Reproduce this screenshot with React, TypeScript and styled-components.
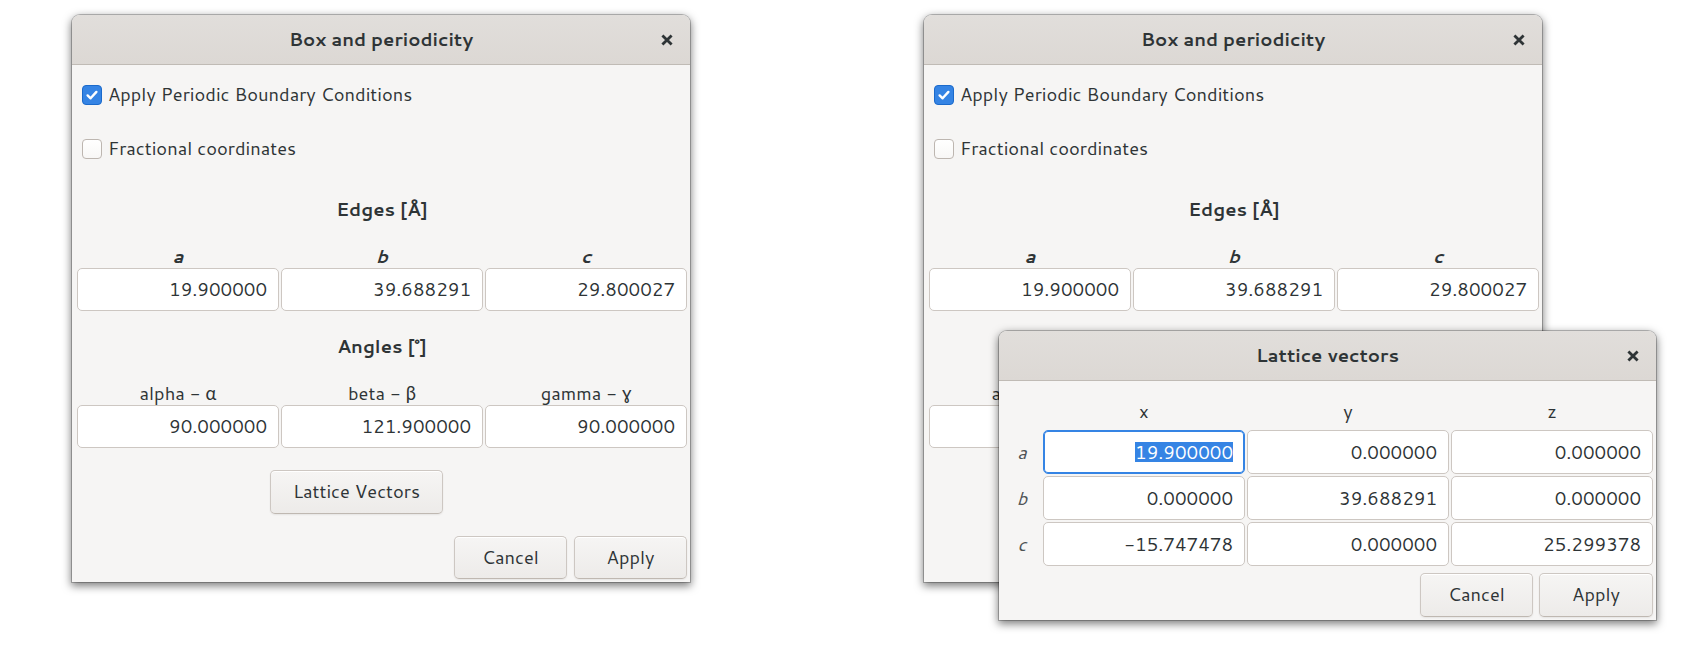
import React from "react";
import styled, { createGlobalStyle, css } from "styled-components";

const GlobalStyle = createGlobalStyle`
  html, body { margin: 0; padding: 0; background: #ffffff; }
  body {
    font-family: Cantarell, Lato, "Noto Sans", sans-serif;
    font-size: 18.3px;
    color: #2e3436;
  }
`;

const Desktop = styled.main`
  display: flex;
  align-items: flex-start;
  gap: 234px;
  padding: 15px 0 0 72px;
  height: 647px;
  box-sizing: border-box;
  overflow: hidden;
`;

const WindowSlot = styled.div`
  position: relative;
`;

const Dialog = styled.section<{ $width: number }>`
  width: ${(p) => p.$width}px;
  display: flex;
  flex-direction: column;
  background: #f6f5f4;
  border-radius: 8px 8px 0 0;
  box-shadow: 0 3px 9px 1px rgba(0, 0, 0, 0.5), 0 0 0 1px rgba(0, 0, 0, 0.23);
`;

const FloatingDialog = styled(Dialog)`
  position: absolute;
  left: 75px;
  top: 316px;
  z-index: 2;
`;

const TitleBar = styled.header`
  height: 49px;
  display: grid;
  grid-template-columns: 1fr auto 1fr;
  align-items: center;
  background: linear-gradient(#e1dedb, #dcd8d4);
  border-bottom: 1px solid #c0bbb5;
  border-radius: 8px 8px 0 0;
`;

const Title = styled.h1`
  grid-column: 2;
  margin: 0;
  font-size: 18.3px;
  font-weight: bold;
  line-height: 22px;
  padding-bottom: 2px;
  color: #2e3436;
`;

const CloseButton = styled.button`
  grid-column: 3;
  justify-self: end;
  margin-right: 17px;
  width: 13px;
  height: 13px;
  padding: 0;
  border: 0;
  background: none;
  display: flex;
  align-items: center;
  justify-content: center;
  color: #2e3436;
`;

const Body = styled.div<{ $pad: string }>`
  display: flex;
  flex-direction: column;
  padding: ${(p) => p.$pad};
`;

const CheckRow = styled.label<{ $mt: number }>`
  display: flex;
  align-items: center;
  gap: 6px;
  height: 21px;
  margin-top: ${(p) => p.$mt}px;
  padding-left: 5px;
  line-height: 21px;
`;

const CheckBox = styled.span<{ $checked?: boolean }>`
  width: 20px;
  height: 20px;
  box-sizing: border-box;
  border-radius: 4px;
  display: flex;
  align-items: center;
  justify-content: center;
  ${(p) =>
    p.$checked
      ? css`
          background: #3584e4;
          border: 1px solid #1b6acb;
        `
      : css`
          background: linear-gradient(#ffffff, #f8f7f6);
          border: 1px solid #bdb6b0;
        `}
`;

const Heading = styled.h2<{ $mt: number }>`
  margin: ${(p) => p.$mt}px 0 0;
  text-align: center;
  font-size: 18.3px;
  font-weight: bold;
  line-height: 22px;
`;

const FieldGrid = styled.div<{ $mt: number; $cols: string; $rowGap: number }>`
  display: grid;
  grid-template-columns: ${(p) => p.$cols};
  column-gap: 2px;
  row-gap: ${(p) => p.$rowGap}px;
  margin-top: ${(p) => p.$mt}px;
`;

const ColLabel = styled.span<{ $em?: boolean; $gap?: number }>`
  text-align: center;
  line-height: 22px;
  margin-bottom: ${(p) => p.$gap ?? 0}px;
  ${(p) =>
    p.$em &&
    css`
      font-weight: bold;
      font-style: italic;
    `}
`;

const RowLabel = styled.span`
  display: flex;
  align-items: center;
  justify-content: center;
  font-style: italic;
  color: #4d5254;
`;

const Entry = styled.div<{ $focused?: boolean; $h: number }>`
  height: ${(p) => p.$h}px;
  box-sizing: border-box;
  display: flex;
  align-items: center;
  justify-content: flex-end;
  padding: 0 11px 1px;
  background: #ffffff;
  border: 1px solid #cdc7c2;
  border-radius: 5px;
  color: #2e3436;
  ${(p) =>
    p.$focused &&
    css`
      border-color: #3584e4;
      box-shadow: inset 0 0 0 1px #3584e4;
    `}
`;

const Selection = styled.span`
  background: #3584e4;
  color: #ffffff;
  line-height: 20px;
`;

const ButtonRow = styled.div<{ $mt: number; $pl?: number; $end?: boolean; $gap?: number }>`
  display: flex;
  justify-content: ${(p) => (p.$end ? "flex-end" : "flex-start")};
  gap: ${(p) => p.$gap ?? 0}px;
  margin-top: ${(p) => p.$mt}px;
  padding-left: ${(p) => p.$pl ?? 0}px;
`;

const PushButton = styled.button<{ $w: number; $h: number }>`
  width: ${(p) => p.$w}px;
  height: ${(p) => p.$h}px;
  box-sizing: border-box;
  padding: 0 0 2px;
  font: inherit;
  color: #2e3436;
  background: linear-gradient(#f6f5f4, #edebe9);
  border: 1px solid #cdc7c2;
  border-bottom-color: #bfb8b1;
  border-radius: 5px;
  box-shadow: inset 0 1px #ffffff, 0 1px 2px rgba(0, 0, 0, 0.07);
`;

const CloseIcon = () => (
  <svg width="12" height="12" viewBox="0 0 12 12" aria-hidden>
    <path d="M1.4 1.4 L10.6 10.6 M10.6 1.4 L1.4 10.6" stroke="currentColor" strokeWidth="2.8" strokeLinecap="butt" />
  </svg>
);

const CheckMark = () => (
  <svg width="14" height="14" viewBox="0 0 14 14" aria-hidden>
    <path d="M2.6 7.4 L5.6 10.3 L11.4 3.9" fill="none" stroke="#ffffff" strokeWidth="2.4" strokeLinecap="round" strokeLinejoin="round" />
  </svg>
);

const edges = [
  { label: "a", value: "19.900000" },
  { label: "b", value: "39.688291" },
  { label: "c", value: "29.800027" },
];

const angles = [
  { label: "alpha - α", value: "90.000000" },
  { label: "beta - β", value: "121.900000" },
  { label: "gamma - ɣ", value: "90.000000" },
];

const lattice = [
  { label: "a", values: ["19.900000", "0.000000", "0.000000"] },
  { label: "b", values: ["0.000000", "39.688291", "0.000000"] },
  { label: "c", values: ["-15.747478", "0.000000", "25.299378"] },
];

const THREE = "repeat(3, 202px)";

function BoxDialog() {
  return (
    <Dialog $width={618}>
      <TitleBar>
        <Title>Box and periodicity</Title>
        <CloseButton aria-label="Close">
          <CloseIcon />
        </CloseButton>
      </TitleBar>
      <Body $pad="0 3px 3px 5px">
        <CheckRow $mt={19}>
          <CheckBox $checked>
            <CheckMark />
          </CheckBox>
          Apply Periodic Boundary Conditions
        </CheckRow>
        <CheckRow $mt={33}>
          <CheckBox />
          Fractional coordinates
        </CheckRow>

        <Heading $mt={39}>Edges [Å]</Heading>
        <FieldGrid $mt={25} $cols={THREE} $rowGap={1}>
          {edges.map((e) => (
            <ColLabel key={e.label} $em>
              {e.label}
            </ColLabel>
          ))}
          {edges.map((e) => (
            <Entry key={e.label} $h={43}>
              {e.value}
            </Entry>
          ))}
        </FieldGrid>

        <Heading $mt={24}>Angles [°]</Heading>
        <FieldGrid $mt={25} $cols={THREE} $rowGap={1}>
          {angles.map((e) => (
            <ColLabel key={e.label}>{e.label}</ColLabel>
          ))}
          {angles.map((e) => (
            <Entry key={e.label} $h={43}>
              {e.value}
            </Entry>
          ))}
        </FieldGrid>

        <ButtonRow $mt={22} $pl={193}>
          <PushButton $w={173} $h={44}>Lattice Vectors</PushButton>
        </ButtonRow>
        <ButtonRow $mt={22} $end $gap={7}>
          <PushButton $w={113} $h={43}>Cancel</PushButton>
          <PushButton $w={113} $h={43}>Apply</PushButton>
        </ButtonRow>
      </Body>
    </Dialog>
  );
}

function LatticeDialog() {
  return (
    <FloatingDialog $width={657}>
      <TitleBar>
        <Title>Lattice vectors</Title>
        <CloseButton aria-label="Close">
          <CloseIcon />
        </CloseButton>
      </TitleBar>
      <Body $pad="0 3px 3px 4px">
        <FieldGrid $mt={19} $cols={`38px ${THREE}`} $rowGap={2}>
          <span />
          {["x", "y", "z"].map((c) => (
            <ColLabel key={c} $gap={6}>
              {c}
            </ColLabel>
          ))}
          {lattice.map((row, r) => (
            <React.Fragment key={row.label}>
              <RowLabel>{row.label}</RowLabel>
              {row.values.map((v, i) =>
                r === 0 && i === 0 ? (
                  <Entry key={i} $h={44} $focused>
                    <Selection>{v}</Selection>
                  </Entry>
                ) : (
                  <Entry key={i} $h={44}>
                    {v}
                  </Entry>
                )
              )}
            </React.Fragment>
          ))}
        </FieldGrid>
        <ButtonRow $mt={7} $end $gap={6}>
          <PushButton $w={113} $h={44}>Cancel</PushButton>
          <PushButton $w={114} $h={44}>Apply</PushButton>
        </ButtonRow>
      </Body>
    </FloatingDialog>
  );
}

export default function App() {
  return (
    <>
      <GlobalStyle />
      <Desktop>
        <BoxDialog />
        <WindowSlot>
          <BoxDialog />
          <LatticeDialog />
        </WindowSlot>
      </Desktop>
    </>
  );
}
